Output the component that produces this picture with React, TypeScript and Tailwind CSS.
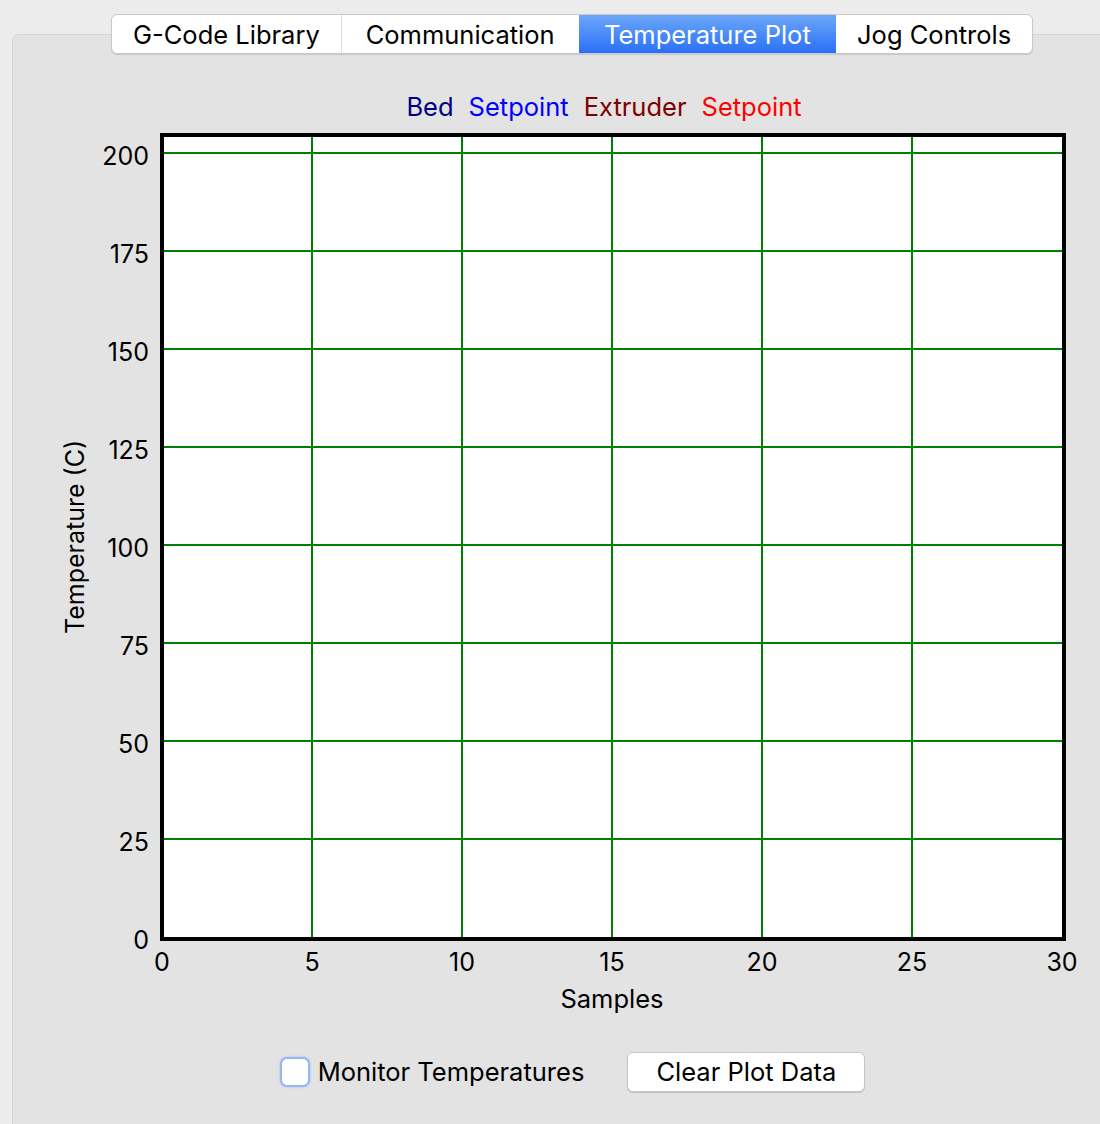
import React from 'react';

const tabs = ['G-Code Library', 'Communication', 'Temperature Plot', 'Jog Controls'];
const tabWidths = ['w-[230px]', 'w-[237px]', 'w-[258px]', 'w-[196px]'];

const yTicks = [0, 25, 50, 75, 100, 125, 150, 175, 200];
const xTicks = [0, 5, 10, 15, 20, 25, 30];

const yPos = (v: number) => 936 - v * 3.92;
const xPos = (v: number) => 162 + v * 30;

const TemperatureChart: React.FC = () => {
    return (
        <svg width={1087} height={895} viewBox="13 125 1087 895" className="block" style={{ fontFamily: 'Inter, "Liberation Sans", sans-serif' }}>
            <rect x={162} y={134} width={902} height={804} fill="#ffffff" />
            {yTicks.slice(1).map(v => (
                <line key={'h' + v} x1={162} x2={1064} y1={yPos(v)} y2={yPos(v)} stroke="#008000" strokeWidth={2} />
            ))}
            {xTicks.slice(1, -1).map(v => (
                <line key={'v' + v} x1={xPos(v)} x2={xPos(v)} y1={134} y2={938} stroke="#008000" strokeWidth={2} />
            ))}
            <rect x={162} y={134} width={902} height={804} fill="none" stroke="#000000" strokeWidth={4} />
            {yTicks.map(v => (
                <text key={'yl' + v} x={149} y={yPos(v) + 12} textAnchor="end" fontSize={25} fill="#000">
                    {v}
                </text>
            ))}
            {xTicks.map(v => (
                <text key={'xl' + v} x={xPos(v)} y={970} textAnchor="middle" fontSize={25} fill="#000">
                    {v}
                </text>
            ))}
            <text x={612} y={1007} textAnchor="middle" fontSize={25.5} fill="#000">
                Samples
            </text>
            <text x={84} y={536} textAnchor="middle" fontSize={25} fill="#000" transform="rotate(-90 84 536)">
                Temperature (C)
            </text>
        </svg>
    );
};

const App: React.FC = () => {
    return (
        <div className="w-[1100px] h-[1124px] overflow-hidden bg-[#ececec] pt-[34px] pl-[12px]" style={{ fontFamily: 'Inter, "Liberation Sans", sans-serif' }}>
            <div className="h-[1100px] bg-[#e3e3e3] border-l border-t border-[#d6d6d6] rounded-tl-[7px]">
                {/* tab bar sits over the panel's top edge */}
                <div className="-mt-[21px] ml-[98px] flex h-[40px] w-[922px] rounded-[6px] border border-[#c9c9c9] bg-white shadow-[0_1px_1px_rgba(0,0,0,0.12)] overflow-hidden">
                    {tabs.map((t, i) => (
                        <div
                            key={t}
                            className={`${tabWidths[i]} flex items-center justify-center pt-[2px] text-[25.5px] ${
                                i === 2
                                    ? 'bg-gradient-to-b from-[#6ca6f8] to-[#2a6ff6] text-white'
                                    : 'text-black'
                            } ${i === 0 ? 'border-r border-[#dedede]' : ''}`}
                        >
                            {t}
                        </div>
                    ))}
                </div>

                <div className="mt-[36px] mb-[2px] h-[34px] flex justify-center gap-[15px] pl-[95px] text-[25.5px] leading-[34px]">
                    <span className="text-[#000080]">Bed</span>
                    <span className="text-[#0000ff]">Setpoint</span>
                    <span className="text-[#800000]">Extruder</span>
                    <span className="text-[#ff0000]">Setpoint</span>
                </div>

                <TemperatureChart />

                <div className="mt-[31px] flex items-center justify-center pl-[32px] text-[25.5px]">
                    <div className="flex items-center gap-[8px]">
                        <div className="w-[30px] h-[30px] rounded-[7px] bg-white border-2 border-[#92b9f2] shadow-[0_0_2px_rgba(80,140,240,0.5)]" />
                        <span>Monitor Temperatures</span>
                    </div>
                    <button className="ml-[43px] w-[238px] h-[40px] rounded-[6px] bg-white border border-[#c6c6c6] shadow-[0_1px_1px_rgba(0,0,0,0.15)] text-[25.5px] text-black">
                        Clear Plot Data
                    </button>
                </div>
            </div>
        </div>
    );
};

export default App;
